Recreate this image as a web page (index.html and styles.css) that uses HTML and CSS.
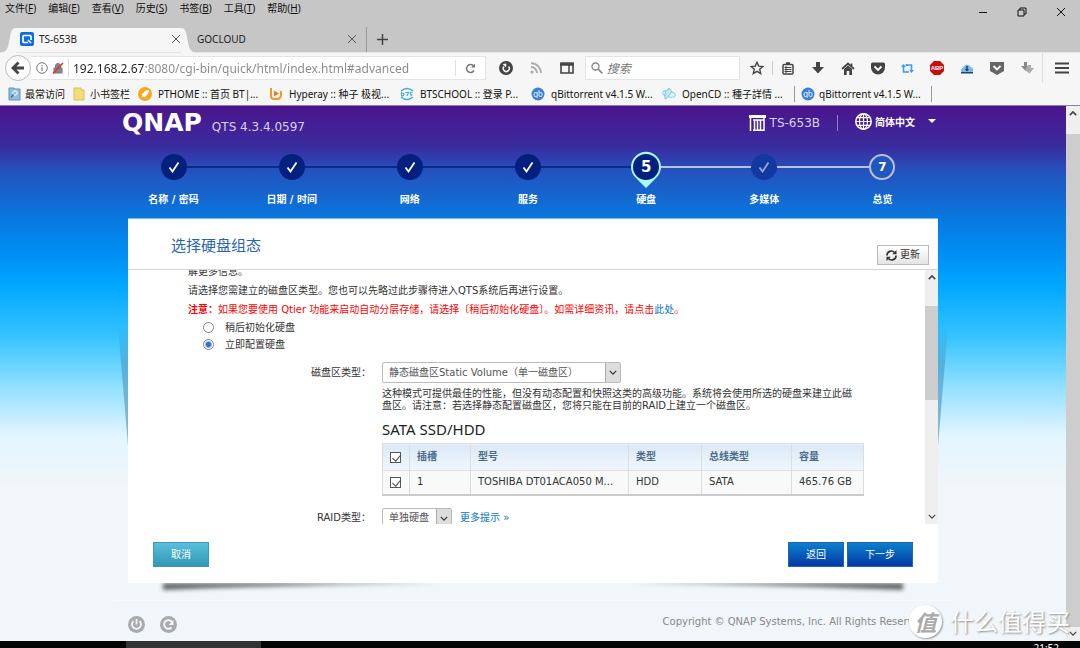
FILE: index.html
```html
<!DOCTYPE html>
<html lang="zh-CN">
<head>
<meta charset="utf-8">
<title>TS-653B</title>
<link rel="stylesheet" href="styles.css">
</head>
<body>
<svg class="defs" width="0" height="0" aria-hidden="true">
  <symbol id="x" viewBox="0 0 10 10"><path d="M1 1l8 8M9 1L1 9" fill="none" stroke="currentColor"/></symbol>
  <symbol id="down" viewBox="0 0 10 6"><path d="M1 1l4 4 4-4" fill="none" stroke="currentColor" stroke-width="1.5"/></symbol>
  <symbol id="up" viewBox="0 0 10 6"><path d="M1 5l4-4 4 4" fill="none" stroke="currentColor" stroke-width="2"/></symbol>
  <symbol id="tick" viewBox="0 0 12 12"><path d="M1.500 6.500l3 4L10.500 1.500" fill="none" stroke="currentColor" stroke-width="1.800"/></symbol>
  <symbol id="qb" viewBox="0 0 14 14"><circle cx="7" cy="7" r="6.500" fill="#3d7fd0"/><path d="M6.200 5v6M6.200 6.500a1.700 2 0 1 0 0 2M8 3v6M8 6.500a1.700 2 0 1 1 0 2" fill="none" stroke="#c5e0ff" stroke-width="1.100"/></symbol>
</svg>

<header class="chrome">
  <div class="menubar">
    <nav class="menus">
      <button>文件(<u>F</u>)</button><button>编辑(<u>E</u>)</button><button>查看(<u>V</u>)</button><button>历史(<u>S</u>)</button><button>书签(<u>B</u>)</button><button>工具(<u>T</u>)</button><button>帮助(<u>H</u>)</button>
    </nav>
    <div class="window-buttons">
      <button aria-label="最小化"><svg width="10" height="10" viewBox="0 0 10 10"><path d="M1 5.500h8" stroke="#111"/></svg></button>
      <button aria-label="还原"><svg width="10" height="10" viewBox="0 0 10 10"><path d="M3 3V1h6v6H7M1 3h6v6H1z" fill="none" stroke="#111"/></svg></button>
      <button aria-label="关闭"><svg width="10" height="10"><use href="#x"/></svg></button>
    </div>
  </div>
  <div class="tabs">
    <div class="tab active">
      <svg class="tab-edge" width="16" height="25" viewBox="0 0 16 25"><path d="M0 25C8 24 8 19 10 9C11 3 12 0 16 0V25z" fill="#f6f6f6"/></svg>
      <div class="tab-body">
        <svg width="14" height="14" viewBox="0 0 14 14"><rect width="14" height="14" rx="2" fill="#0c6fe0"/><path d="M8 10.500H4Q3 10.500 3 9.500V4.500Q3 3.500 4 3.500H10Q11 3.500 11 4.500V8M8 8l3 3" fill="none" stroke="#fff" stroke-width="1.700"/></svg>
        <span>TS-653B</span>
        <button aria-label="关闭标签页"><svg width="10" height="10"><use href="#x"/></svg></button>
      </div>
      <svg class="tab-edge" width="16" height="25" viewBox="0 0 16 25"><path d="M16 25C8 24 8 19 6 9C5 3 4 0 0 0V25z" fill="#f6f6f6"/></svg>
    </div>
    <div class="tab idle"><span>GOCLOUD</span><button aria-label="关闭标签页"><svg width="10" height="10"><use href="#x"/></svg></button></div>
    <button class="new-tab" aria-label="新建标签页"><svg width="11" height="11" viewBox="0 0 11 11"><path d="M5.500 0v11M0 5.500h11" stroke="#444" stroke-width="1.500"/></svg></button>
  </div>
  <div class="toolbar">
    <button class="back" aria-label="后退"><svg width="14" height="14" viewBox="0 0 14 14"><path d="M7.500 1.500L2 7l5.500 5.500M2.500 7H13" fill="none" stroke="#444" stroke-width="2.800"/></svg></button>
    <div class="urlbox">
      <svg width="12" height="12" viewBox="0 0 12 12"><circle cx="6" cy="6" r="5.300" fill="none" stroke="#777"/><path d="M6 5.200v3.800M6 3v1.300" stroke="#777" stroke-width="1.200"/></svg>
      <svg width="12" height="12" viewBox="0 0 12 12"><path d="M2 6h8v5H2zM3.500 6V4a2.500 2.500 0 0 1 5 0v2" fill="#888" stroke="#777"/><path d="M1 11.500L11 1" stroke="#e03030" stroke-width="1.500"/></svg>
      <input class="url" aria-label="地址" value="192.168.2.67:8080/cgi-bin/quick/html/index.html#advanced">
      <button class="reload" aria-label="重新加载"><svg width="11" height="11" viewBox="0 0 11 11"><path d="M9 7.500A4 4 0 1 1 8.700 3" fill="none" stroke="#777" stroke-width="1.500"/><path d="M10 .5v4H6z" fill="#777"/></svg></button>
    </div>
    <div class="tools tools-left">
      <button aria-label="恢复"><svg width="14" height="14" viewBox="0 0 14 14"><circle cx="7" cy="7" r="7" fill="#444"/><path d="M5 5.500A3 3 0 1 0 9.500 5.500" fill="none" stroke="#f6f6f6" stroke-width="1.500"/><path d="M3.500 3l4-.5-.5 4z" fill="#f6f6f6"/></svg></button>
      <button aria-label="订阅"><svg width="12" height="12" viewBox="0 0 12 12"><circle cx="2" cy="10" r="1.600" fill="#aaa"/><path d="M1 5a6 6 0 0 1 6 6M1 1.200A10 10 0 0 1 11 11" fill="none" stroke="#aaa" stroke-width="1.800"/></svg></button>
      <button aria-label="侧栏"><svg width="14" height="12" viewBox="0 0 14 12"><path d="M1 1h12v10H1z" fill="none" stroke="#444" stroke-width="1.600"/><path d="M0 2.500h14" stroke="#444" stroke-width="2.500"/><path d="M9 2v9" stroke="#444" stroke-width="1.500"/></svg></button>
    </div>
    <label class="searchbox"><svg width="12" height="12" viewBox="0 0 12 12"><circle cx="4.500" cy="4.500" r="3.500" fill="none" stroke="#888" stroke-width="1.400"/><path d="M7.200 7.200L11.300 11.300" stroke="#888" stroke-width="1.700"/></svg><input placeholder="搜索" aria-label="搜索"></label>
    <div class="tools tools-right">
      <button class="star" aria-label="收藏"><svg width="14" height="14" viewBox="0 0 14 14"><path d="M7 1.200l1.700 3.900 4.200.4-3.200 2.800 1 4.200L7 10.300l-3.700 2.200 1-4.200L1.100 5.500l4.200-.4z" fill="none" stroke="#444" stroke-width="1.400"/></svg></button>
      <button aria-label="书签列表"><svg width="12" height="13" viewBox="0 0 12 13"><rect x="1" y="2.500" width="10" height="9.500" rx="1" fill="none" stroke="#444" stroke-width="1.500"/><path d="M4 1.200h4" stroke="#444" stroke-width="2"/><path d="M2.500 5.500h7M2.500 7.500h7M2.500 9.500h7M4 4v7" stroke="#444"/></svg></button>
      <button aria-label="下载"><svg width="12" height="12" viewBox="0 0 12 12"><path d="M4 0h4v5h4L6 11.500 0 5h4z" fill="#444"/></svg></button>
      <button aria-label="主页"><svg width="14" height="13" viewBox="0 0 14 13"><path d="M1 7l6-5.500L13 7M10.500 1.500v3" fill="none" stroke="#444" stroke-width="1.700"/><path d="M3 7l4-3.500L11 7v6H8.300V9H5.700v4H3z" fill="#444"/></svg></button>
      <button aria-label="Pocket"><svg width="14" height="13" viewBox="0 0 14 13"><path d="M1.500.5h11Q14 .5 14 2v3.500a7 7 0 0 1-14 0V2Q0 .5 1.500.5z" fill="#444"/><path d="M3.500 4.500L7 8l3.500-3.500" fill="none" stroke="#fff" stroke-width="1.800"/></svg></button>
      <button aria-label="切换"><svg width="13" height="13" viewBox="0 0 13 13"><path d="M2.500 4V10H6M5 3h5.500V9" fill="none" stroke="#3d9bff" stroke-width="1.600"/><path d="M0 5l2.500-3L5 5zM8 8l2.500 3L13 8z" fill="#3d9bff"/><path d="M5 10h3M4.500 3H7" stroke="#3d9bff" stroke-width="1.600"/></svg></button>
      <button aria-label="ABP"><svg width="14" height="14" viewBox="0 0 14 14"><path d="M4 0h6l4 4v6l-4 4H4l-4-4V4z" fill="#c70d0d"/><text x="7" y="9.300" class="abp" text-anchor="middle">ABP</text></svg></button>
      <button aria-label="云下载"><svg width="14" height="11" viewBox="0 0 14 11"><path d="M2 9.500A2.500 2.500 0 0 1 3 5a4 4 0 0 1 7.500-1A3 3 0 0 1 12 9.500z" fill="#7db7f2"/><path d="M1 9.800h12M7 3v4" stroke="#23445f" stroke-width="1.600"/><path d="M4.800 6h4.400L7 8.500z" fill="#23445f"/></svg></button>
      <button aria-label="保存"><svg width="14" height="14" viewBox="0 0 14 14"><path d="M0 1h14v9l-7 4-7-4z" fill="#666"/><path d="M3.500 5L7 8.500 10.500 5" fill="none" stroke="#fff" stroke-width="1.800"/></svg></button>
      <button aria-label="批量下载"><svg width="13" height="12" viewBox="0 0 13 12"><path d="M3 0h3v4h3l-4.500 5L0 4h3z" fill="#888"/><path d="M7 3h3v3h3l-4.500 5.500L4 8z" fill="#aaa"/></svg></button>
    </div>
    <button class="hamburger" aria-label="菜单"><svg width="14" height="12" viewBox="0 0 14 12"><path d="M0 1.500h14M0 6h14M0 10.500h14" stroke="#444" stroke-width="2.200"/></svg></button>
  </div>
  <nav class="bookmarks">
    <a href="#"><svg width="13" height="14" viewBox="0 0 13 14"><path d="M1 1h5l1 1h5v11H1z" fill="#92bcdc" stroke="#5f95bd"/><circle cx="7" cy="6" r="2.200" fill="none" stroke="#fff"/><path d="M5.500 7.500L3 10.500" stroke="#39739f" stroke-width="1.500"/></svg><span>最常访问</span></a>
    <a href="#"><svg width="13" height="14" viewBox="0 0 13 14"><path d="M1 1h7v2h3v10H1z" fill="#f2dc7c" stroke="#d9bf5a"/></svg><span>小书签栏</span></a>
    <a href="#" class="wide"><svg width="14" height="14" viewBox="0 0 14 14"><circle cx="7" cy="7" r="7" fill="#f8a81e"/><path d="M11 3C8 3 6 4.500 5 6.500L3.200 7l1.300 1.200L3.500 10.500 6 9.500 7 11l.7-2C9.800 8 11 6 11 3z" fill="#fff"/></svg><span>PTHOME :: 首页 BT|...</span></a>
    <a href="#" class="wide"><svg width="14" height="14" viewBox="0 0 14 14"><path d="M2 1v8q0 3 3 3h4q3-1 3-4V4" fill="none" stroke="#f09a2c" stroke-width="2"/><path d="M5 3.500l5 3-5 3z" fill="#ee7b25"/></svg><span>Hyperay :: 种子 极视...</span></a>
    <a href="#" class="wide"><svg width="14" height="14" viewBox="0 0 14 14"><path d="M1 4q6-5 12 0M1 10q6 5 12 0" fill="none" stroke="#4aaada" stroke-width="1.500"/><path d="M1.500 5v4q3 0 2.500-2-.5-1-2.500 0M5.500 5.500h3L7 9M12.500 5q-3 0-2 2 3 1 0 2" fill="none" stroke="#4aaada" stroke-width="1.200"/></svg><span>BTSCHOOL :: 登录 P...</span></a>
    <a href="#" class="wide"><svg width="14" height="14"><use href="#qb"/></svg><span>qBittorrent v4.1.5 W...</span></a>
    <a href="#" class="wide"><svg width="14" height="14" viewBox="0 0 14 14"><ellipse cx="7" cy="7" rx="6.500" ry="2.800" transform="rotate(15 7 7)" fill="#e4f6fc" stroke="#8bcfe9"/><path d="M3 12Q2 3 7 1.500 11 3 8 7 6 11 3 12z" fill="#bfe7f5" stroke="#7cc6e4"/></svg><span>OpenCD :: 種子詳情 ...</span></a>
    <a href="#" class="boxed"><svg width="14" height="14"><use href="#qb"/></svg><span>qBittorrent v4.1.5 W...</span></a>
  </nav>
</header>

<div class="viewport">
<div class="site">
  <div class="sitehead">
    <strong class="logo">QNAP</strong>
    <span class="version">QTS 4.3.4.0597</span>
    <span class="model"><svg width="17" height="16" viewBox="0 0 17 16"><path d="M0 0h17v3H0z" fill="#fff"/><path d="M1.500 3v13M4 5h11" stroke="#fff" stroke-width="1.500"/><path d="M5.500 5v11M8.500 5v11M11.500 5v11M15 3v13M4 15.300h11" stroke="#fff" stroke-width="1.500"/></svg>TS-653B</span>
    <button class="lang"><svg width="17" height="17" viewBox="0 0 17 17"><circle cx="8.500" cy="8.500" r="7.700" fill="none" stroke="#fff" stroke-width="1.500"/><ellipse cx="8.500" cy="8.500" rx="4" ry="7.700" fill="none" stroke="#fff" stroke-width="1.200"/><path d="M8.500 1v15M1 8.500h15M2 4.700h13M2 12.300h13" stroke="#fff" stroke-width="1.200"/></svg>简体中文<i class="caret"></i></button>
  </div>
  <ol class="steps">
    <li class="done"><b><svg width="12" height="12"><use href="#tick"/></svg></b><span>名称 / 密码</span></li>
    <li class="done"><b><svg width="12" height="12"><use href="#tick"/></svg></b><span>日期 / 时间</span></li>
    <li class="done"><b><svg width="12" height="12"><use href="#tick"/></svg></b><span>网络</span></li>
    <li class="done"><b><svg width="12" height="12"><use href="#tick"/></svg></b><span>服务</span></li>
    <li class="current"><svg class="pin" width="32" height="37" viewBox="0 0 32 37"><path d="M16 37L6 27A15 15 0 1 1 26 27z" fill="#a5fbff"/></svg><b>5</b><span>硬盘</span></li>
    <li class="dim"><b><svg width="12" height="12"><use href="#tick"/></svg></b><span>多媒体</span></li>
    <li class="todo"><b>7</b><span>总览</span></li>
  </ol>

  <main class="panel">
    <div class="panel-head">
      <h1>选择硬盘组态</h1>
      <button class="refresh"><svg width="11" height="11" viewBox="0 0 11 11"><path d="M1 5.500A4.300 4.300 0 0 1 8.500 2.500M10 5.500A4.300 4.300 0 0 1 2.500 8.500" fill="none" stroke="#333" stroke-width="1.700"/><path d="M10.500 0v4.200H6.300zM.5 11V6.800h4.200z" fill="#333"/></svg>更新</button>
    </div>
    <div class="pane">
      <div class="clip">
      <div class="content">
        <p>解更多信息。</p>
        <p>请选择您需建立的磁盘区类型。您也可以先略过此步骤待进入QTS系统后再进行设置。</p>
        <p class="warn"><b>注意：</b>如果您要使用 Qtier 功能来启动自动分层存储，请选择〔稍后初始化硬盘〕。如需详细资讯，请点击<a href="#">此处</a>。</p>
        <label class="option"><input type="radio" name="init"><span>稍后初始化硬盘</span></label>
        <label class="option"><input type="radio" name="init" checked><span>立即配置硬盘</span></label>
        <div class="form">
          <label for="vol">磁盘区类型：</label>
          <div>
            <span class="select vol"><select id="vol"><option>静态磁盘区Static Volume（单一磁盘区）</option></select><svg width="8" height="5"><use href="#down"/></svg></span>
            <p class="hint">这种模式可提供最佳的性能，但没有动态配置和快照这类的高级功能。系统将会使用所选的硬盘来建立此磁盘区。请注意：若选择静态配置磁盘区，您将只能在目前的RAID上建立一个磁盘区。</p>
            <h2>SATA SSD/HDD</h2>
            <table>
              <colgroup><col class="c1"><col class="c2"><col class="c3"><col class="c4"><col class="c5"><col class="c6"></colgroup>
              <thead><tr><th><input type="checkbox" checked aria-label="全选"></th><th>插槽</th><th>型号</th><th>类型</th><th>总线类型</th><th>容量</th></tr></thead>
              <tbody><tr><td><input type="checkbox" checked aria-label="选择硬盘 1"></td><td>1</td><td>TOSHIBA DT01ACA050 M...</td><td>HDD</td><td>SATA</td><td>465.76 GB</td></tr></tbody>
            </table>
          </div>
          <label for="raid">RAID类型：</label>
          <div class="raidrow"><span class="select raid"><select id="raid"><option>单独硬盘</option></select><svg width="8" height="5"><use href="#down"/></svg></span><a href="#">更多提示 »</a></div>
        </div>
      </div>
      </div>
      <div class="bar inner"><svg width="8" height="5"><use href="#up"/></svg><i></i><svg width="8" height="5"><use href="#down"/></svg></div>
    </div>
    <div class="actions"><button class="cancel">取消</button><button>返回</button><button>下一步</button></div>
    <svg class="flap left" width="10" height="120" viewBox="0 0 10 120"><defs><linearGradient id="fade" x2="0" y2="1"><stop stop-color="#26739a" stop-opacity="0"/><stop offset=".3" stop-color="#26739a" stop-opacity=".35"/><stop offset="1" stop-color="#26739a" stop-opacity=".5"/></linearGradient></defs><path d="M0 0h10v120z" fill="url(#fade)"/></svg>
    <svg class="flap right" width="10" height="120" viewBox="0 0 10 120"><path d="M10 0H0v120z" fill="url(#fade)"/></svg>
    <svg class="under" viewBox="0 0 740 16" preserveAspectRatio="none"><path d="M0-3H740V7Q370-8 0 7z" fill="#666"/></svg>
  </main>
  <footer>
    <button aria-label="关机"><svg width="17" height="17" viewBox="0 0 17 17"><circle cx="8.500" cy="8.500" r="8.500" fill="#aaa"/><path d="M5.500 5a4.500 4.500 0 1 0 6 0M8.500 3v5.500" fill="none" stroke="#f0f6f9" stroke-width="1.800"/></svg></button>
    <button aria-label="重启"><svg width="17" height="17" viewBox="0 0 17 17"><circle cx="8.500" cy="8.500" r="8.500" fill="#aaa"/><path d="M11.500 11.500A4.300 4.300 0 1 1 12 6" fill="none" stroke="#f0f6f9" stroke-width="1.900"/><path d="M13.500 4v5H8.500z" fill="#f0f6f9"/></svg></button>
    <span>Copyright © QNAP Systems, Inc. All Rights Reserved</span>
  </footer>
</div>
<div class="bar outer"><svg width="8" height="5"><use href="#up"/></svg><i></i><svg width="8" height="5"><use href="#down"/></svg></div>
<div class="watermark"><b>值</b><span>什么值得买</span></div>
</div>
<div class="taskbar"><i></i><time>21:52</time></div>
</body>
</html>
```

FILE: styles.css
```css
* { box-sizing: border-box; }
body {
  margin: 0;
  height: 100vh;
  overflow: hidden;
  display: flex;
  flex-direction: column;
  font: 10px/12px "DejaVu Sans", "Noto Sans CJK SC", sans-serif;
  color: #333;
}
button, input, select { font: inherit; color: inherit; margin: 0; padding: 0; border: 0; background: none; }
button, .tab-body, label, .urlbox { display: flex; align-items: center; }
a { color: #0b75bd; text-decoration: none; }
svg { flex: none; display: block; }
p, h1, h2, ol { margin: 0; padding: 0; }
.defs { position: absolute; }

.chrome { flex: none; background: #f6f6f6; font-family: "Noto Sans", "Noto Sans CJK SC", sans-serif; color: #111; }
.menubar { display: flex; justify-content: space-between; height: 27px; background: #c6c6c6; padding-left: 5px; }
.menus { display: flex; gap: 12px; height: 15px; align-items: center; }
.menus button { display: block; font-size: 10px; }
.window-buttons { display: flex; padding: 7px 14px 0 0; gap: 29px; align-items: flex-start; }
.tabs { display: flex; height: 26px; background: #c6c6c6; border-bottom: 1px solid #e4e4e4; color: #222; }
.tabs button { color: #555; }
.tab { display: flex; width: 180px; }
.tab.active { width: 197px; margin-right: -1px; }
.tab-edge { margin-top: 1px; }
.tab-body { flex: 1; margin-top: 1px; background: #f6f6f6; gap: 5px; padding: 0 0 2px 4px; }
.tab-body button, .idle button { margin-left: auto; }
.idle { width: 171px; align-items: center; padding: 0 9px 1px 1px; border-right: 1px solid #999; }
.new-tab { padding: 0 10px; }

.toolbar { display: flex; align-items: center; height: 30px; }
.back { width: 26px; height: 26px; margin-left: 5px; justify-content: center; border: 1px solid #bbb; border-radius: 50%; background: #fbfbfb; z-index: 1; }
.urlbox { flex: 460; height: 24px; background: #fff; border: 1px solid #e4e4e4; border-left: 0; gap: 4px; padding-left: 5px; }
.url {
  flex: 1;
  min-width: 0;
  padding-left: 4px;
  border-left: 1px solid #ddd;
  font-size: 12px;
  line-height: 16px;
  height: 18px;
  color: transparent;
  background: linear-gradient(90deg, #222 75px, #888 75px);
  background-clip: text;
  -webkit-background-clip: text;
}
.reload { padding: 0 9px; height: 16px; border-left: 1px solid #ddd; }
.tools { display: flex; }
.tools button { flex: 1; justify-content: center; height: 20px; }
.tools-left { width: 91px; margin: 0 3px 0 5px; }
.searchbox { flex: 152; height: 24px; background: #fff; border: 1px solid #e4e4e4; padding-left: 5px; gap: 4px; }
.searchbox input { width: 100%; min-width: 0; font-size: 12px; height: 20px; }
.searchbox input::placeholder { color: #777; font-style: italic; }
.tools-right { width: 300px; margin-left: 2px; }
.tools-right .star { border-right: 1px solid #ccc; height: 14px; margin: 3px 0; }
.abp { font: bold 6px "Liberation Sans", sans-serif; fill: #fff; }
.hamburger { border-left: 1px solid #ddd; height: 30px; padding: 0 11px 0 12px; }

.bookmarks { display: flex; height: 23px; padding-bottom: 1px; align-items: center; padding-left: 8px; border-bottom: 1px solid #8a80a8; }
.bookmarks a { display: flex; align-items: center; gap: 4px; width: 65px; color: #111; white-space: nowrap; }
.bookmarks .wide { width: 131px; gap: 6px; }
.bookmarks .boxed { width: 138px; border: 1px solid #999; border-width: 0 1px; padding-left: 6px; height: 16px; margin-left: 1px; }

.viewport { flex: 1; min-height: 0; display: flex; position: relative; }
.site {
  flex: 1;
  overflow: hidden;
  background: linear-gradient(#4b148c 0, #3a2c9e 40px, #2452bd 65px, #0877dd 110px, #0090f5 150px, #00a6ff 178px, #35c3ff 230px, #90dfff 280px, #e3f5ff 330px, #f0f6f9 380px);
}
.sitehead { width: 816px; margin: 0 auto; display: flex; align-items: center; height: 38px; color: #d8d2ee; font-size: 12px; }
.logo { color: #fff; font-size: 25px; line-height: 34px; height: 38px; }
.version { padding: 4px 0 0 10px; }
.model { display: flex; align-items: center; gap: 4px; margin-left: auto; padding-right: 17px; border-right: 1px solid #8d80c8; margin-bottom: 5px; }
.lang { color: #fff; padding: 0 2px 8px 17px; font: bold 10px "Noto Sans CJK SC", sans-serif; gap: 3px; }
.caret { border: 4px solid transparent; border-top-color: #fff; border-bottom: 0; margin-left: 10px; }

.steps { width: 827px; margin: 0 auto; display: grid; grid-template-columns: repeat(7, 1fr); list-style: none; height: 74px; padding-top: 10px; color: #fff; font-weight: bold; }
.steps { position: relative; left: -5px; }
.sitehead { position: relative; left: -3px; }
.steps li { position: relative; display: flex; flex-direction: column; align-items: center; gap: 14px; }
.steps li::before { content: ""; position: absolute; top: 12px; left: -50%; width: 100%; height: 2px; background: #082a8c; }
.steps li:first-child::before { display: none; }
.steps li.dim::before, .steps li.todo::before { background: #b8bfdf; }
.steps b { z-index: 1; display: flex; align-items: center; justify-content: center; width: 26px; height: 26px; border-radius: 50%; background: #04207f; font-size: 15px; }
.steps .pin { position: absolute; top: -3px; left: calc(50% - 16px); z-index: 1; }
.steps .dim b { background: #1339a0; color: #9aa8dd; }
.steps .todo b { border: 2px solid #bfc0d6; background: #1f57bf; font-size: 12px; }

.panel { position: relative; width: 810px; margin: 0 auto; background: #fff; border-top: 1px solid #7ab8f0; }
.panel-head { display: flex; align-items: flex-end; justify-content: space-between; height: 51px; border-bottom: 1px solid #d5d5d5; padding: 0 9px 4px 43px; }
h1 { font: 15px/40px "Noto Sans CJK SC", sans-serif; color: #2864b0; }
.refresh { height: 20px; padding: 0 8px; gap: 3px; border: 1px solid #bbb; background: linear-gradient(#fff, #e4e4e4); }
.pane { display: flex; height: 254px; }
.clip { flex: 1; overflow: hidden; }
.content { margin-top: -8px; padding-left: 60px; }
.content > p { line-height: 19px; }
.warn, .warn b { color: #f00; }
.option { height: 17px; gap: 11px; padding-left: 15px; }
input[type=radio] { appearance: none; width: 11px; height: 11px; border: 1px solid #888; border-radius: 50%; background: #fff; }
input[type=radio]:checked { background: radial-gradient(circle, #2b6fdb 2px, #fff 4px); }
.form { display: grid; grid-template-columns: 183px 481px; column-gap: 11px; padding-top: 9px; }
.form > label { justify-content: flex-end; height: 21px; }
.select { position: relative; display: block; height: 21px; }
.select select { appearance: none; width: 100%; height: 21px; border: 1px solid #bbb; border-radius: 2px; padding-left: 6px; color: #555; background: linear-gradient(90deg, #aaa 1px, #ddd 1px) right / 15px 100% no-repeat #fff; }
.select svg { position: absolute; right: 4px; top: 8px; pointer-events: none; }
.vol { width: 239px; }
.raid { width: 70px; }
.hint { padding: 5px 7px 0 0; line-height: 12px; }
h2 { font: 15px/20px "Noto Sans", sans-serif; color: #222; padding-top: 7px; height: 31px; }
table { width: 481px; table-layout: fixed; border-collapse: collapse; border-bottom: 2px solid #ccc; }
th, td { border: 1px solid #ddd; text-align: left; padding: 0 0 0 7px; height: 27px; white-space: nowrap; }
td { height: 24px; background: #f9f9f9; }
th { background: linear-gradient(#dbe9f5, #eff7fd); color: #4b6c8b; }
.c1 { width: 27px; } .c2 { width: 61px; } .c3 { width: 158px; } .c4 { width: 73px; } .c5 { width: 90px; } .c6 { width: 72px; }
input[type=checkbox] { appearance: none; display: block; position: relative; width: 11px; height: 11px; border: 1px solid #555; background: #fff; }
input[type=checkbox]::before { content: ""; position: absolute; left: 3px; top: 0; width: 4px; height: 7px; border: solid #444; border-width: 0 1px 1px 0; transform: rotate(40deg); }
.raidrow { display: flex; gap: 8px; align-items: center; }
.form > label[for=raid], .raidrow { margin-top: 12px; height: 21px; }
.bar { flex: none; width: 13px; background: #efefef; display: flex; flex-direction: column; align-items: center; color: #444; padding: 5px 0; }
.bar i { width: 100%; background: #cdcdcd; margin-bottom: auto; }
.inner i { height: 94px; margin-top: 26px; }
.outer { width: 14px; }
.outer i { flex: 1; margin: 18px 0 4px; }
.actions { display: flex; gap: 3px; padding: 18px 25px 16px; }
.actions button { height: 25px; padding: 0 17px; color: #fff; background: linear-gradient(#0a80cc, #0338a3); border: 1px solid #2365b0; }
.actions .cancel { margin-right: auto; background: linear-gradient(#58bfdc, #2f96b3); border-color: #3b9ab5; }
.flap { position: absolute; top: 107px; }
.flap.left { right: 100%; }
.flap.right { left: 100%; }
.under { position: absolute; top: 100%; left: 35px; width: calc(100% - 70px); height: 16px; filter: blur(2px); clip-path: inset(0 -6px -6px); }
footer { width: 838px; margin: 17px auto 0; padding: 15px 26px 0 14px; display: flex; align-items: center; gap: 15px; border-top: 1px solid #f8fafc; color: #888; }
footer span { margin-left: auto; padding-bottom: 5px; }
.watermark { position: absolute; right: 10px; bottom: 3px; display: flex; align-items: center; gap: 8px; font: 24px/34px "Noto Sans CJK SC", sans-serif; color: #fff; text-shadow: 1px 1px 2px #888; }
.watermark b { width: 33px; height: 33px; line-height: 33px; border-radius: 50%; background: #fff; color: #aaa; font-size: 22px; font-style: italic; text-align: center; text-shadow: none; box-shadow: 1px 1px 2px #999; }
.taskbar { flex: none; display: flex; justify-content: space-between; height: 7px; overflow: hidden; background: #050505; padding-left: 126px; color: #fff; }
.taskbar i { width: 135px; background: #333; }
.taskbar time { font: 10px/12px "Noto Sans", sans-serif; padding: 1px 21px 0 0; }
```
